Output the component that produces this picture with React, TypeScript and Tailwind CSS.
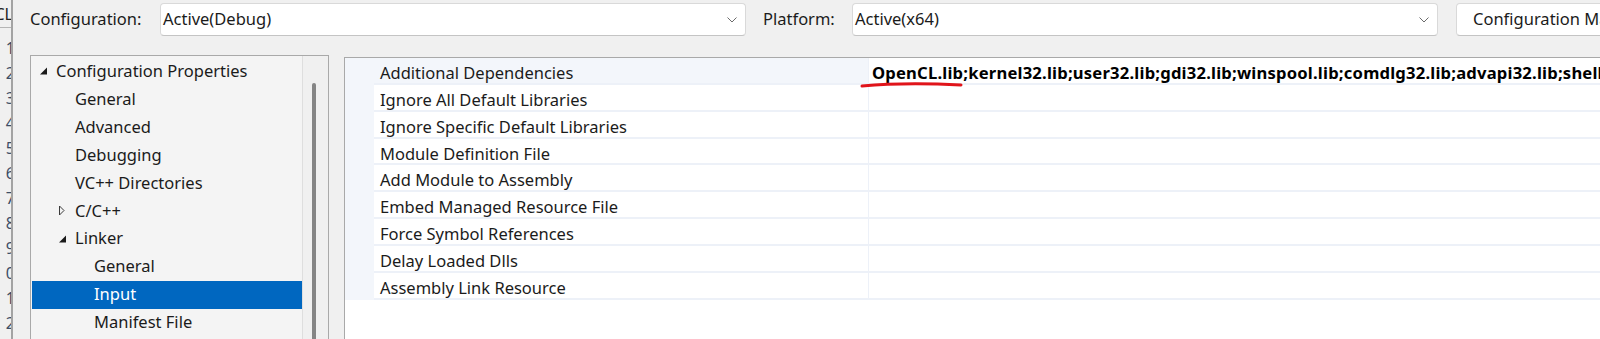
import React from 'react';

type TreeItem = {
  label: string;
  level: number;
  arrow?: 'open' | 'closed';
  selected?: boolean;
};

const treeItems: TreeItem[] = [
  { label: 'Configuration Properties', level: 0, arrow: 'open' },
  { label: 'General', level: 1 },
  { label: 'Advanced', level: 1 },
  { label: 'Debugging', level: 1 },
  { label: 'VC++ Directories', level: 1 },
  { label: 'C/C++', level: 1, arrow: 'closed' },
  { label: 'Linker', level: 1, arrow: 'open' },
  { label: 'General', level: 2 },
  { label: 'Input', level: 2, selected: true },
  { label: 'Manifest File', level: 2 },
  { label: 'Debugging', level: 2 },
];

const indent = ['pl-[8px]', 'pl-[27px]', 'pl-[46px]'];

const properties = [
  'Additional Dependencies',
  'Ignore All Default Libraries',
  'Ignore Specific Default Libraries',
  'Module Definition File',
  'Add Module to Assembly',
  'Embed Managed Resource File',
  'Force Symbol References',
  'Delay Loaded Dlls',
  'Assembly Link Resource',
];

const deps =
  'OpenCL.lib;kernel32.lib;user32.lib;gdi32.lib;winspool.lib;comdlg32.lib;advapi32.lib;shell32.lib;ole32.lib;oleaut32.lib;uuid.lib';

const lineNumbers = ['1', '2', '3', '4', '5', '6', '7', '8', '9', '0', '1', '2'];

function Chevron() {
  return (
    <svg width="10" height="6" viewBox="0 0 10 6" className="shrink-0">
      <path d="M0.5 0.5 L5 5 L9.5 0.5" fill="none" stroke="#6b6b6b" strokeWidth="1" />
    </svg>
  );
}

function Arrow({ kind }: { kind?: 'open' | 'closed' }) {
  if (kind === 'open') {
    return (
      <svg width="16" height="10" viewBox="0 0 16 10" className="shrink-0">
        <path d="M7 1.5 L7 8.5 L0 8.5 Z" fill="#1a1a1a" />
      </svg>
    );
  }
  if (kind === 'closed') {
    return (
      <svg width="16" height="12" viewBox="0 0 16 12" className="shrink-0">
        <path d="M0.5 1 L5 5.5 L0.5 10 Z" fill="none" stroke="#3a3a3a" strokeWidth="1" />
      </svg>
    );
  }
  return <span className="w-[16px] shrink-0" />;
}

function Dropdown({ value }: { value: string }) {
  return (
    <div className="w-[586px] h-[33px] shrink-0 bg-white border border-[#d9d9d9] border-b-[#c4c4c4] rounded-[4px] flex items-center pl-[2px] pr-[8px] justify-between">
      <span className="text-[16.5px] text-[#1b1b1b]">{value}</span>
      <Chevron />
    </div>
  );
}

export default function App() {
  return (
    <div className="w-[1600px] h-[339px] overflow-hidden bg-[#f0f0f0] flex font-['Noto_Sans',sans-serif] text-[#1b1b1b] relative">
      {/* clipped editor gutter at the far left */}
      <div className="w-[13px] shrink-0 border-r-[2px] border-[#a3a3a3] flex flex-col overflow-hidden">
        <div className="h-[28px] border-b border-[#b5b5b5] flex items-center justify-end">
          <span className="text-[16px] leading-none mr-[-2px] text-[#222]">CL</span>
        </div>
        <div className="pt-[7px] flex flex-col">
          {lineNumbers.map((n, i) => (
            <div key={i} className="h-[25px] flex items-center justify-end mr-[-4px]">
              <span className="text-[16px] leading-none text-[#3d4d66]">{n}</span>
            </div>
          ))}
        </div>
      </div>

      <div className="flex-1 flex flex-col min-w-0">
        {/* top bar */}
        <div className="h-[55px] flex items-start pt-[3px] shrink-0">
          <div className="w-[147px] h-[33px] shrink-0 pl-[17px] flex items-center text-[16.5px]">Configuration:</div>
          <Dropdown value="Active(Debug)" />
          <div className="w-[106px] h-[33px] shrink-0 pl-[17px] flex items-center text-[16.5px]">Platform:</div>
          <Dropdown value="Active(x64)" />
          <div className="ml-[18px] w-[200px] h-[33px] shrink-0 bg-white border border-[#d9d9d9] border-b-[#c4c4c4] rounded-[4px] flex items-center pl-[16px] whitespace-nowrap text-[16.5px]">
            Configuration Manager...
          </div>
        </div>

        <div className="flex-1 flex items-start min-h-0">
          {/* tree */}
          <div className="ml-[17px] w-[299px] h-[300px] shrink-0 border border-[#a9a9a9] bg-[#f4f4f4] flex">
            <div className="w-[271px] pt-[1.5px] pl-[1px] flex flex-col overflow-hidden">
              {treeItems.map((item, i) => (
                <div
                  key={i}
                  className={`h-[27.9px] shrink-0 flex items-center text-[16.5px] whitespace-nowrap ${indent[item.level]} ${
                    item.selected ? 'bg-[#0067c0] text-white' : ''
                  }`}
                >
                  <Arrow kind={item.arrow} />
                  <span>{item.label}</span>
                </div>
              ))}
            </div>
            <div className="flex-1 border-l border-[#dedede] bg-[#f0f0f0] pl-[9px] pt-[27px]">
              <div className="w-[4px] h-[260px] rounded-full bg-[#858585]" />
            </div>
          </div>

          {/* property grid */}
          <div className="ml-[15px] mt-[2px] flex-1 h-[300px] border-l border-t border-[#a9a9a9] bg-white flex flex-col">
            {properties.map((p, i) => (
              <div key={p} className="h-[26.85px] shrink-0 flex">
                <div className="w-[29px] shrink-0 bg-[#f3f6fb]" />
                <div
                  className={`w-[494px] shrink-0 pl-[6px] pt-[4px] flex items-start leading-[22px] border-b-[2px] border-[#edf1f8] text-[16.5px] whitespace-nowrap ${
                    i === 0 ? 'bg-[#f3f6fb]' : 'bg-white'
                  }`}
                >
                  {p}
                </div>
                <div className="flex-1 min-w-0 border-l border-b-[2px] border-[#edf1f8] pl-[3px] pt-[4px] flex items-start leading-[22px] overflow-hidden">
                  {i === 0 && (
                    <span className="font-bold text-[16.6px] tracking-[0.2px] text-black whitespace-nowrap">{deps}</span>
                  )}
                </div>
              </div>
            ))}
          </div>
        </div>
      </div>

      {/* hand-drawn red underline over OpenCL.lib */}
      <svg className="absolute left-0 top-0 pointer-events-none" width="1600" height="339">
        <path d="M862 86 Q 905 82 961 85" fill="none" stroke="#e0141a" strokeWidth="3" strokeLinecap="round" />
      </svg>
    </div>
  );
}
